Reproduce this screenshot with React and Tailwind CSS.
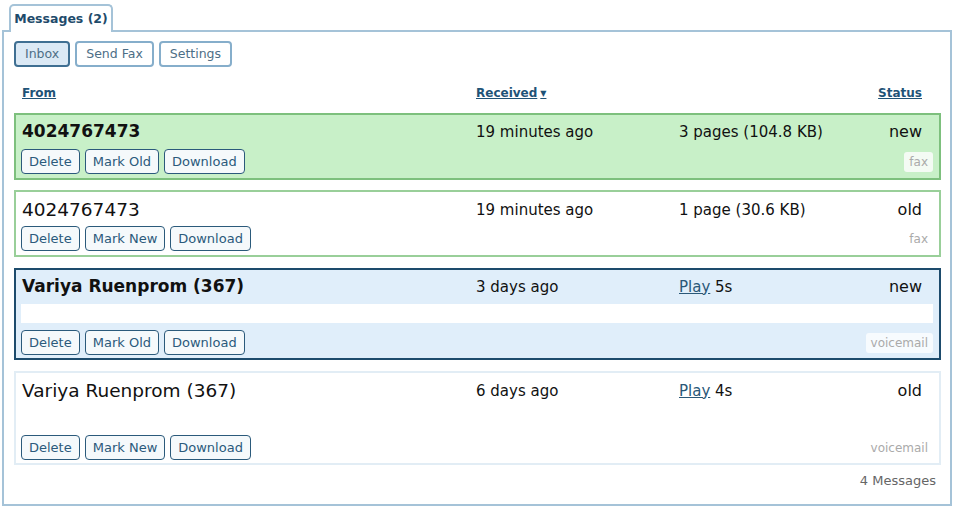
import React from "react";

const FONT = { fontFamily: '"DejaVu Sans", "Liberation Sans", sans-serif' };

const messages = [
  {
    id: 1,
    from: "4024767473",
    received: "19 minutes ago",
    detail: "3 pages (104.8 KB)",
    status: "new",
    type: "fax",
  },
  {
    id: 2,
    from: "4024767473",
    received: "19 minutes ago",
    detail: "1 page (30.6 KB)",
    status: "old",
    type: "fax",
  },
  {
    id: 3,
    from: "Variya Ruenprom (367)",
    received: "3 days ago",
    play: "5s",
    status: "new",
    type: "voicemail",
    selected: true,
  },
  {
    id: 4,
    from: "Variya Ruenprom (367)",
    received: "6 days ago",
    play: "4s",
    status: "old",
    type: "voicemail",
  },
];

// ── Small action button ──
const RowButton = ({ children }) => (
  <button className="h-[25px] px-[7px] rounded-[4px] border border-[#2b5a7b] bg-[#f5f9fb] text-[13px] text-[#2b5a7b] leading-none">
    {children}
  </button>
);

// ── Top toolbar button ──
const ToolButton = ({ children, active }) => (
  <button
    className={`h-[26px] px-[9px] rounded-[4px] border-2 text-[12.5px] leading-none ${
      active
        ? "bg-[#dbe9f5] border-[#3f6f92] text-[#4d6e86]"
        : "bg-white border-[#86aecb] text-[#4d6e86]"
    }`}
  >
    {children}
  </button>
);

const MessageRow = ({ msg, gap }) => {
  const isNew = msg.status === "new";
  const isFax = msg.type === "fax";

  let box = "bg-white border-[#e2edf5]";
  if (isFax) box = isNew ? "bg-[#c8f0c8] border-[#7dc07d]" : "bg-white border-[#99cf99]";
  if (msg.selected) box = "bg-[#e0eefa] border-[#1d4b6c]";

  return (
    <div className={`border-2 ${box} pl-[5px] pr-[6px] pt-[4px] ${isFax ? "pb-[4px]" : "pb-[3px]"} ${gap}`}>
      {/* top line */}
      <div className="grid grid-cols-[455px_203px_1fr_auto] items-center h-[26px] text-[#111]">
        <div className={`pl-[1px] ${isNew ? "font-bold text-[17px]" : "text-[18.5px]"}`}>{msg.from}</div>
        <div className="text-[15px]">{msg.received}</div>
        <div className="text-[15px]">
          {msg.play ? (
            <>
              <a href="#" className="underline text-[#2a5878]">Play</a> {msg.play}
            </>
          ) : (
            msg.detail
          )}
        </div>
        <div className="text-[16px] pr-[11px]">{msg.status}</div>
      </div>

      {/* voicemail player bar */}
      {!isFax && (
        <div className={`h-[19px] mt-[4px] ${msg.selected ? "bg-white" : "bg-transparent"}`} />
      )}

      {/* actions */}
      <div className={`flex items-center justify-between ${isFax ? "mt-[4px]" : msg.selected ? "mt-[7px]" : "mt-[9px]"}`}>
        <div className="flex gap-[5px]">
          <RowButton>Delete</RowButton>
          <RowButton>{isNew ? "Mark Old" : "Mark New"}</RowButton>
          <RowButton>Download</RowButton>
        </div>
        <span
          className={`px-[5px] py-[3px] rounded-[3px] text-[12px] text-[#aaa] leading-[14px] ${
            isNew ? (isFax ? "bg-[#f4fbf4]" : "bg-[#f7fbfe]") : ""
          }`}
        >
          {msg.type}
        </span>
      </div>
    </div>
  );
};

const gaps = ["mb-[10px]", "mb-[11px]", "mb-[11px]", "mb-[10px]"];

export default function App() {
  return (
    <div className="w-[954px] h-[509px] bg-white pl-[2px] pt-[4px]" style={FONT}>
      {/* Tab */}
      <div className="relative z-10 ml-[7px] w-[104px] h-[28px] -mb-[2px] rounded-t-[5px] border-2 border-b-0 border-[#a5c3d8] bg-white flex items-center justify-center">
        <span className="text-[12.5px] font-bold text-[#1e4b6b]">Messages (2)</span>
      </div>

      {/* Panel */}
      <div className="w-[950px] h-[476px] border-2 border-[#a5c3d8] pl-[10px] pr-[9px] pt-[9px]">
        {/* Toolbar */}
        <div className="flex gap-[5px]">
          <ToolButton active>Inbox</ToolButton>
          <ToolButton>Send Fax</ToolButton>
          <ToolButton>Settings</ToolButton>
        </div>

        {/* Column headers */}
        <div className="grid grid-cols-[454px_1fr_auto] items-center h-[18px] mt-[17px] mb-[11px] px-[8px] text-[12px] font-bold text-[#1f5377]">
          <a href="#" className="underline">From</a>
          <a href="#" className="underline">
            Received<span className="text-[8px] align-middle ml-[3px]">▼</span>
          </a>
          <a href="#" className="underline pr-[11px]">Status</a>
        </div>

        {/* Rows */}
        {messages.map((msg, i) => (
          <MessageRow key={msg.id} msg={msg} gap={gaps[i]} />
        ))}

        <div className="text-right text-[13px] text-[#666] -mt-[4px] pr-[5px]">4 Messages</div>
      </div>
    </div>
  );
}
